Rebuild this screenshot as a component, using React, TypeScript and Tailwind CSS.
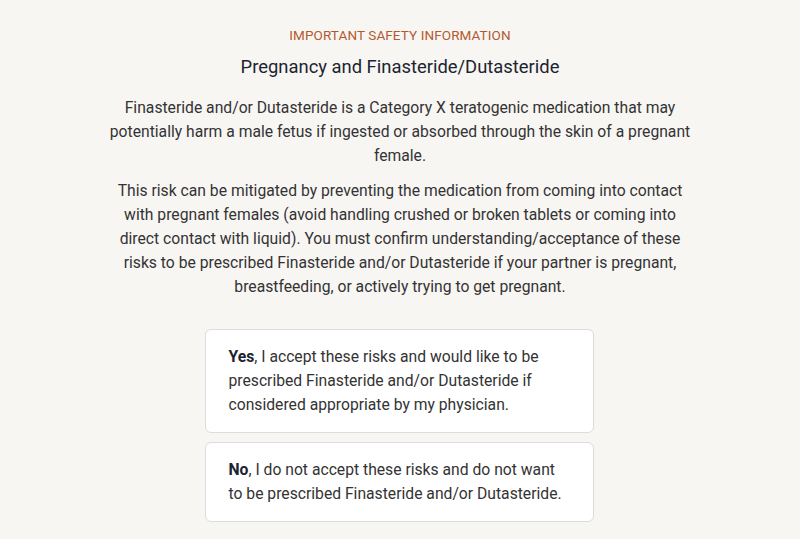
export default function App() {
  return (
    <div className="min-h-[539px] w-full bg-[#f8f6f3] text-[#333333]" style={{ fontFamily: "Roboto, 'Liberation Sans', sans-serif" }}>
      <div className="mx-auto flex w-[590px] flex-col items-center pt-[26px] text-center">
        <div className="text-[13.5px] leading-[18px] tracking-[0.1px] text-[#b45a30]">IMPORTANT SAFETY INFORMATION</div>
        <h1 className="mt-[10px] text-[18.4px] leading-[26px] font-normal text-[#1c2430]">Pregnancy and Finasteride/Dutasteride</h1>
        <p className="mt-[16px] text-[15.7px] leading-[24px]">
          Finasteride and/or Dutasteride is a Category X teratogenic medication that may potentially harm a male fetus if ingested or absorbed through the skin of a pregnant female.
        </p>
        <p className="mt-[11px] text-[15.7px] leading-[24px]">
          This risk can be mitigated by preventing the medication from coming into contact with pregnant females (avoid handling crushed or broken tablets or coming into direct contact with liquid). You must confirm understanding/acceptance of these risks to be prescribed Finasteride and/or Dutasteride if your partner is pregnant, breastfeeding, or actively trying to get pregnant.
        </p>
        <div className="mt-[30px] mr-[2px] flex w-[389px] flex-col gap-[9px] text-left">
          <div className="rounded-[6px] border border-[#dcdcdc] bg-white px-[23px] py-[15px] text-[15.7px] leading-[24px]">
            <span className="font-bold text-[#1c2430]">Yes</span>, I accept these risks and would like to be prescribed Finasteride and/or Dutasteride if considered appropriate by my physician.
          </div>
          <div className="rounded-[6px] border border-[#dcdcdc] bg-white px-[23px] py-[15px] text-[15.7px] leading-[24px]">
            <span className="font-bold text-[#1c2430]">No</span>, I do not accept these risks and do not want to be prescribed Finasteride and/or Dutasteride.
          </div>
        </div>
      </div>
    </div>
  );
}
